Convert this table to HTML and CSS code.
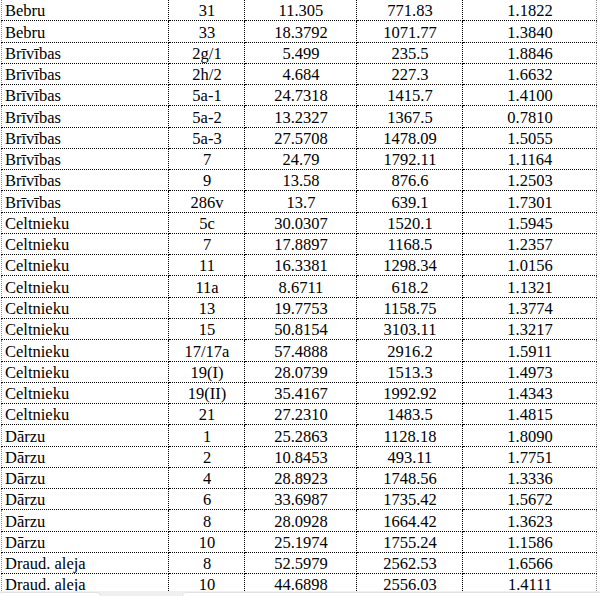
FILE: index.html
```html
<!DOCTYPE html>
<html>
<head>
<meta charset="utf-8">
<link rel="stylesheet" href="styles.css">
</head>
<body>
<table class="data">
<colgroup><col class="c1"><col class="c2"><col class="c3"><col class="c4"><col class="c5"></colgroup>
<tbody>
<tr><td>Bebru</td><td>31</td><td>11.305</td><td>771.83</td><td>1.1822</td></tr>
<tr><td>Bebru</td><td>33</td><td>18.3792</td><td>1071.77</td><td>1.3840</td></tr>
<tr><td>Brīvības</td><td>2g/1</td><td>5.499</td><td>235.5</td><td>1.8846</td></tr>
<tr><td>Brīvības</td><td>2h/2</td><td>4.684</td><td>227.3</td><td>1.6632</td></tr>
<tr><td>Brīvības</td><td>5a-1</td><td>24.7318</td><td>1415.7</td><td>1.4100</td></tr>
<tr><td>Brīvības</td><td>5a-2</td><td>13.2327</td><td>1367.5</td><td>0.7810</td></tr>
<tr><td>Brīvības</td><td>5a-3</td><td>27.5708</td><td>1478.09</td><td>1.5055</td></tr>
<tr><td>Brīvības</td><td>7</td><td>24.79</td><td>1792.11</td><td>1.1164</td></tr>
<tr><td>Brīvības</td><td>9</td><td>13.58</td><td>876.6</td><td>1.2503</td></tr>
<tr><td>Brīvības</td><td>286v</td><td>13.7</td><td>639.1</td><td>1.7301</td></tr>
<tr><td>Celtnieku</td><td>5c</td><td>30.0307</td><td>1520.1</td><td>1.5945</td></tr>
<tr><td>Celtnieku</td><td>7</td><td>17.8897</td><td>1168.5</td><td>1.2357</td></tr>
<tr><td>Celtnieku</td><td>11</td><td>16.3381</td><td>1298.34</td><td>1.0156</td></tr>
<tr><td>Celtnieku</td><td>11a</td><td>8.6711</td><td>618.2</td><td>1.1321</td></tr>
<tr><td>Celtnieku</td><td>13</td><td>19.7753</td><td>1158.75</td><td>1.3774</td></tr>
<tr><td>Celtnieku</td><td>15</td><td>50.8154</td><td>3103.11</td><td>1.3217</td></tr>
<tr><td>Celtnieku</td><td>17/17a</td><td>57.4888</td><td>2916.2</td><td>1.5911</td></tr>
<tr><td>Celtnieku</td><td>19(I)</td><td>28.0739</td><td>1513.3</td><td>1.4973</td></tr>
<tr><td>Celtnieku</td><td>19(II)</td><td>35.4167</td><td>1992.92</td><td>1.4343</td></tr>
<tr><td>Celtnieku</td><td>21</td><td>27.2310</td><td>1483.5</td><td>1.4815</td></tr>
<tr><td>Dārzu</td><td>1</td><td>25.2863</td><td>1128.18</td><td>1.8090</td></tr>
<tr><td>Dārzu</td><td>2</td><td>10.8453</td><td>493.11</td><td>1.7751</td></tr>
<tr><td>Dārzu</td><td>4</td><td>28.8923</td><td>1748.56</td><td>1.3336</td></tr>
<tr><td>Dārzu</td><td>6</td><td>33.6987</td><td>1735.42</td><td>1.5672</td></tr>
<tr><td>Dārzu</td><td>8</td><td>28.0928</td><td>1664.42</td><td>1.3623</td></tr>
<tr><td>Dārzu</td><td>10</td><td>25.1974</td><td>1755.24</td><td>1.1586</td></tr>
<tr><td>Draud. aleja</td><td>8</td><td>52.5979</td><td>2562.53</td><td>1.6566</td></tr>
<tr><td>Draud. aleja</td><td>10</td><td>44.6898</td><td>2556.03</td><td>1.4111</td></tr>
</tbody>
</table>
<div class="bottombar">
  <div class="tab tab-a"></div>
  <div class="tab tab-b"></div>
</div>
</body>
</html>
```

FILE: styles.css
```css
html, body {
  margin: 0;
  padding: 0;
  background: #ffffff;
  overflow: hidden;
}
body {
  font-family: "Liberation Serif", "Times New Roman", serif;
  font-size: 16.5px;
  color: #000;
}
.data {
  border-collapse: collapse;
  table-layout: fixed;
  width: 596px;
  margin: -1px 0 0 1px;
}
.c1 { width: 167px; }
.c2 { width: 76px; }
.c3 { width: 112px; }
.c4 { width: 106px; }
.c5 { width: 134px; }
.data tr { height: 21.27px; }
.data td {
  border: 1px dotted #000;
  padding: 0 2px 0 3px;
  line-height: 18px;
  vertical-align: bottom;
  text-align: center;
  white-space: nowrap;
  overflow: hidden;
}
.data td:first-child {
  text-align: left;
  border-left-color: #888;
}
.data td:last-child {
  border-right-color: #888;
}
.bottombar {
  position: fixed;
  left: 0;
  right: 0;
  bottom: 0;
  height: 5px;
  background: #f0f0f0;
}
.tab {
  position: absolute;
  top: 1px;
  height: 8px;
  background: #fff;
  border: 1px solid #e2e2e2;
  border-radius: 4px;
}
.tab-a { left: -2px; width: 101px; }
.tab-b { left: 182px; width: 430px; }
```
